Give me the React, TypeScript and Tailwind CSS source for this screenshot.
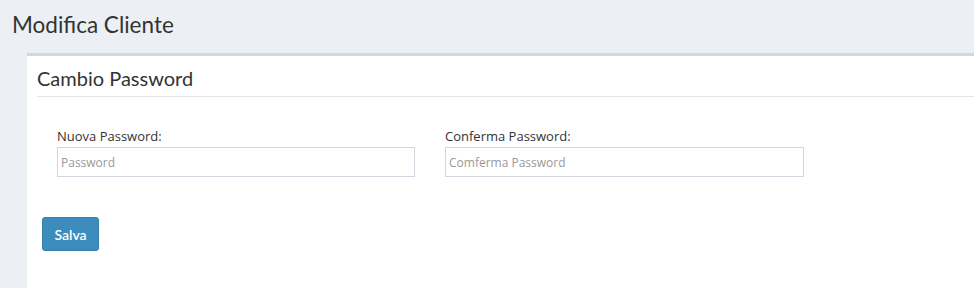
export default function App() {
  const font = { fontFamily: '"Source Sans Pro", Lato, "Open Sans", sans-serif' };
  return (
    <div className="w-[974px] h-[288px] bg-[#ecf0f5] overflow-hidden text-[#333]" style={font}>
      <div className="pl-[12px] pt-[9px] h-[53px]">
        <h1 className="text-[22.5px] leading-[32px] font-normal text-[#333]">Modifica Cliente</h1>
      </div>
      <div className="ml-[27px] border-t-[3px] border-[#d2d6de] bg-white h-[235px]">
        <div className="ml-[10px] border-b border-[#e5e5e5] h-[41px] pt-[10px]">
          <h3 className="text-[20px] leading-[24px] text-[#333]">Cambio Password</h3>
        </div>
        <div className="pl-[30px] pt-[30px] flex gap-[30px]">
          <div className="flex flex-col w-[358px]">
            <label className="text-[13px] leading-[18px] mb-[2px] text-[#333]" style={{ fontFamily: '"Open Sans", sans-serif' }}>Nuova Password:</label>
            <input
              type="password"
              placeholder="Password"
              className="h-[30px] border border-[#d2d6de] px-[3px] text-[12px] placeholder:text-[#999] outline-none"
              style={{ fontFamily: '"Open Sans", sans-serif' }}
            />
          </div>
          <div className="flex flex-col w-[359px]">
            <label className="text-[13px] leading-[18px] mb-[2px] text-[#333]" style={{ fontFamily: '"Open Sans", sans-serif' }}>Conferma Password:</label>
            <input
              type="password"
              placeholder="Comferma Password"
              className="h-[30px] border border-[#d2d6de] px-[3px] text-[12px] placeholder:text-[#999] outline-none"
              style={{ fontFamily: '"Open Sans", sans-serif' }}
            />
          </div>
        </div>
        <div className="pl-[15px] pt-[40px]">
          <button className="w-[57px] h-[34px] bg-[#3c8dbc] border border-[#367fa9] rounded-[3px] text-white text-[14px] font-semibold">
            Salva
          </button>
        </div>
      </div>
    </div>
  );
}
